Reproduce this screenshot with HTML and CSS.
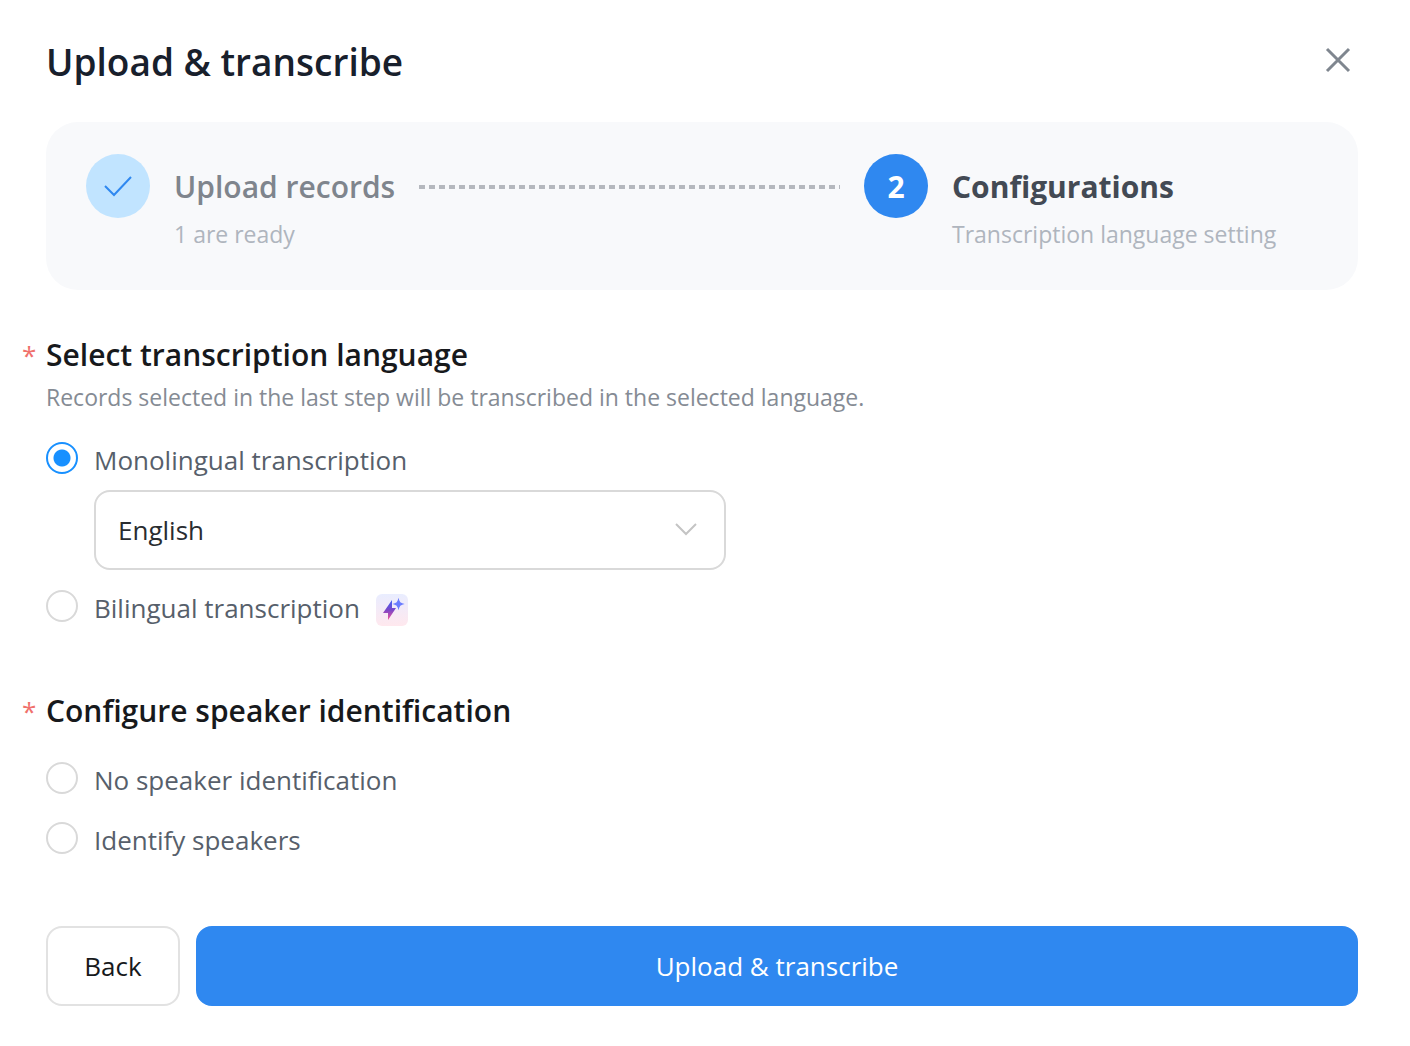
FILE: index.html
```html
<!DOCTYPE html>
<html lang="en">
<head>
<meta charset="utf-8">
<meta name="viewport" content="width=device-width, initial-scale=1">
<title>Upload &amp; transcribe</title>
<link rel="stylesheet" href="styles.css">
</head>
<body>
<main class="dialog">
  <header class="dialog-header">
    <h1 class="dialog-title">Upload &amp; transcribe</h1>
    <button class="close" type="button" aria-label="Close">
      <svg width="28" height="28" viewBox="0 0 28 28" fill="none" stroke="#7f868f" stroke-width="3"><path d="M3 3L25 25M25 3L3 25"/></svg>
    </button>
  </header>

  <ol class="steps">
    <li class="step step-done">
      <span class="step-badge">
        <svg width="32" height="32" viewBox="0 0 32 32" fill="none" stroke="#2f88f0" stroke-width="2"><path d="M3 16L12 25L29 7"/></svg>
      </span>
      <div class="step-body">
        <div class="step-heading"><span class="step-name">Upload records</span><span class="step-line"></span></div>
        <div class="step-note">1 are ready</div>
      </div>
    </li>
    <li class="step step-current" aria-current="step">
      <span class="step-badge">2</span>
      <div class="step-body">
        <div class="step-heading"><span class="step-name">Configurations</span></div>
        <div class="step-note">Transcription language setting</div>
      </div>
    </li>
  </ol>

  <form class="form">
    <section class="group group-language" role="radiogroup" aria-labelledby="language-title">
      <h2 class="group-title" id="language-title"><span class="required">*</span>Select transcription language</h2>
      <p class="hint">Records selected in the last step will be transcribed in the selected language.</p>
      <label class="option"><input class="radio" type="radio" name="mode" checked><span>Monolingual transcription</span></label>
      <div class="select">
        <select class="select-field" aria-label="Language"><option>English</option></select>
        <svg class="select-arrow" width="24" height="24" viewBox="0 0 24 24" fill="none" stroke="#c4c4c4" stroke-width="2"><path d="M2 6L12 16L22 6"/></svg>
      </div>
      <label class="option"><input class="radio" type="radio" name="mode"><span>Bilingual transcription</span>
        <svg class="pro" width="32" height="32" viewBox="0 0 32 32">
          <defs>
            <linearGradient id="tile" x1="0" y1="0" x2="0" y2="1"><stop offset="0" stop-color="#e9edff"/><stop offset="1" stop-color="#ffe8ee"/></linearGradient>
            <linearGradient id="bolt" x1="0" y1="0" x2="0" y2="1"><stop offset="0" stop-color="#3f63f5"/><stop offset=".5" stop-color="#7a46c8"/><stop offset="1" stop-color="#f0559a"/></linearGradient>
          </defs>
          <rect width="32" height="32" rx="6" fill="url(#tile)"/>
          <path d="M16 6V14H20L12 26V19H7Z" fill="url(#bolt)"/>
          <path d="M22.500 6.500Q23.300 9.200 26 10Q23.300 10.800 22.500 13.500Q21.700 10.800 19 10Q21.700 9.200 22.500 6.500Z" fill="#6a7cff" stroke="#6a7cff" stroke-width="1.500"/>
        </svg>
      </label>
    </section>

    <section class="group" role="radiogroup" aria-labelledby="speaker-title">
      <h2 class="group-title" id="speaker-title"><span class="required">*</span>Configure speaker identification</h2>
      <div class="options">
        <label class="option"><input class="radio" type="radio" name="speaker"><span>No speaker identification</span></label>
        <label class="option"><input class="radio" type="radio" name="speaker"><span>Identify speakers</span></label>
      </div>
    </section>

    <footer class="actions">
      <button class="button" type="button">Back</button>
      <button class="button button-primary" type="button">Upload &amp; transcribe</button>
    </footer>
  </form>
</main>
</body>
</html>
```
FILE: styles.css
```css
* { box-sizing: border-box; }

body {
  margin: 0;
  background: #fff;
  color: #17191c;
  font-family: "Open Sans", "Noto Sans", sans-serif;
  font-size: 26px;
}

h1, h2, p, ol { margin: 0; padding: 0; }

.dialog { padding: 36px 52px 40px 46px; }

.dialog-header {
  display: flex;
  align-items: flex-start;
  justify-content: space-between;
}

.dialog-title { font-size: 37px; font-weight: 600; line-height: 52px; color: #18202c; }

.close { display: flex; padding: 10px 6px; border: 0; background: none; }

.steps {
  display: flex;
  gap: 24px;
  margin-top: 34px;
  padding: 32px 40px 42px;
  border-radius: 32px;
  background: #f8f9fb;
  list-style: none;
}

.step { display: flex; gap: 24px; }
.step-done { flex: 1; }
.step-current { flex: 0 0 454px; }

.step-badge {
  display: flex;
  flex: none;
  align-items: center;
  justify-content: center;
  width: 64px;
  height: 64px;
  border-radius: 50%;
  background: #2f88f0;
  color: #fff;
  font-size: 30px;
  font-weight: 700;
}
.step-done .step-badge { background: #c1e4ff; }

.step-body { flex: 1; }
.step-heading { display: flex; align-items: center; gap: 24px; font-size: 30px; line-height: 66px; }
.step-done .step-name { color: #7f858d; font-weight: 600; }
.step-current .step-name { color: #434a54; font-weight: 700; }
.step-line {
  flex: 1;
  height: 4px;
  background: repeating-linear-gradient(90deg, #b5b8be 0 6px, transparent 6px 10px);
}
.step-note { color: #afb5be; font-size: 23px; line-height: 28px; }

.group { margin-bottom: 64px; }
.group-language { margin: 45px 0 61px; }
.group-title { display: flex; margin-left: -24px; font-size: 30px; font-weight: 600; line-height: 40px; }
.required { width: 24px; color: #f0706c; font-size: 26px; font-weight: 400; }
.hint { margin-bottom: 19px; color: #858b94; font-size: 23px; line-height: 44px; }

.option { display: flex; align-items: center; gap: 16px; height: 44px; color: #575f6b; }
.options { display: flex; flex-direction: column; gap: 16px; margin-top: 27px; }
.pro { margin-top: 4px; }

.radio {
  appearance: none;
  flex: none;
  width: 32px;
  height: 32px;
  margin: 0 0 4px;
  border: 2px solid #d9d9d9;
  border-radius: 50%;
  background: #fff;
}
.radio:checked { border-color: #1890ff; background: radial-gradient(circle, #1890ff 8px, #fff 9px); }

.select { display: grid; align-items: center; width: 632px; max-width: 100%; margin: 8px 0 16px 48px; }
.select-field, .select-arrow { grid-area: 1 / 1; }
.select-field {
  appearance: none;
  width: 100%;
  height: 80px;
  padding: 0 22px;
  border: 2px solid #d9d9d9;
  border-radius: 16px;
  background: #fff;
  color: #292c30;
  font: inherit;
}
.select-arrow { justify-self: end; margin-right: 28px; pointer-events: none; }

.actions { display: flex; gap: 16px; }
.button {
  min-width: 134px;
  height: 80px;
  padding: 0 36px;
  border: 2px solid #e2e2e2;
  border-radius: 16px;
  background: #fff;
  color: #17191c;
  font: inherit;
}
.button-primary { flex: 1; border-color: #2f88f0; background: #2f88f0; color: #fff; }
```
